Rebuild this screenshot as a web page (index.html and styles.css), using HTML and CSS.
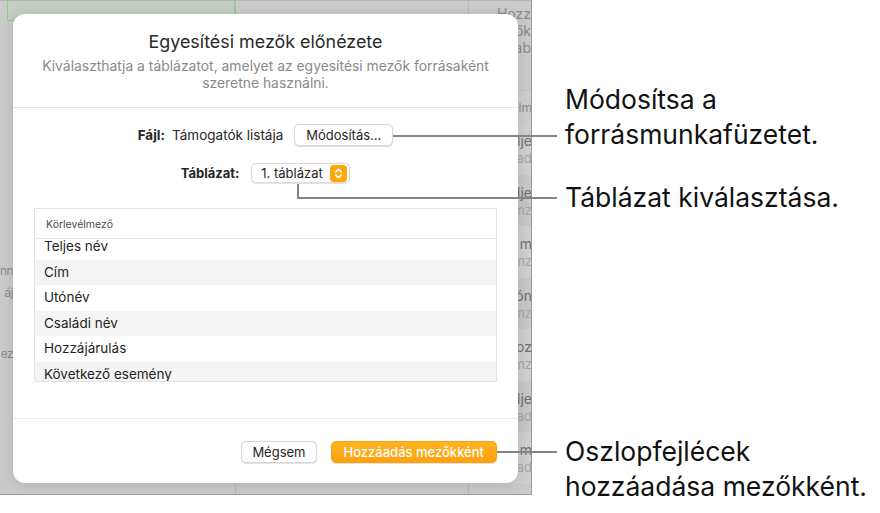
FILE: index.html
```html
<!DOCTYPE html>
<html lang="hu">
<head>
<meta charset="utf-8">
<title>Egyesítési mezők előnézete</title>
<link rel="stylesheet" href="styles.css">
</head>
<body>
<div class="stage">
  <div class="app">
    <div class="col col-a">
      <div class="cell-sel"></div>
      <div class="edge-txt t1">nn</div>
      <div class="edge-txt t2">áj</div>
      <div class="edge-txt t3">ez</div>
    </div>
    <div class="col col-b"></div>
    <div class="col col-c">
      <div class="c-head"><span class="h1">Hozz</span><span>ők</span><span>ab</span></div>
      <div class="c-sub">elm</div>
      <div class="c-row"><span class="n">lje</span><span class="s">lad</span></div>
      <div class="c-row alt"><span class="n">lje</span><span class="s">mz</span></div>
      <div class="c-row"><span class="n">m</span><span class="s">mz</span></div>
      <div class="c-row alt"><span class="n">ón</span><span class="s">mz</span></div>
      <div class="c-row"><span class="n">oz</span><span class="s">mz</span></div>
      <div class="c-row alt"><span class="n">lje</span><span class="s">lad</span></div>
      <div class="c-row"><span class="n">m</span><span class="s">lad</span></div>
    </div>
  </div>

  <div class="dialog">
    <div class="d-head">
      <div class="d-title">Egyesítési mezők előnézete</div>
      <div class="d-sub">Kiválaszthatja a táblázatot, amelyet az egyesítési mezők forrásaként<br>szeretne használni.</div>
    </div>
    <div class="d-body">
      <div class="frow">
        <span class="lbl">Fájl:</span>
        <span class="val">Támogatók listája</span>
        <button class="btn">Módosítás...</button>
      </div>
      <div class="frow trow">
        <span class="lbl">Táblázat:</span>
        <div class="popup">
          <span>1. táblázat</span>
          <svg class="stepper" width="17" height="17" viewBox="0 0 17 17"><rect width="17" height="17" rx="4" fill="#fea808"/><path d="M5.6 7.2 L8.5 4.4 L11.4 7.2 M5.6 9.8 L8.5 12.6 L11.4 9.8" stroke="#fff" stroke-width="1.6" fill="none" stroke-linecap="round" stroke-linejoin="round"/></svg>
        </div>
      </div>
      <div class="list">
        <div class="l-head">Körlevélmező</div>
        <div class="l-body">
          <div class="l-inner">
            <div class="l-row">Teljes név</div>
            <div class="l-row alt">Cím</div>
            <div class="l-row">Utónév</div>
            <div class="l-row alt">Családi név</div>
            <div class="l-row">Hozzájárulás</div>
            <div class="l-row alt">Következő esemény</div>
          </div>
        </div>
      </div>
    </div>
    <div class="d-foot">
      <button class="btn">Mégsem</button>
      <button class="btn primary">Hozzáadás mezőkként</button>
    </div>
  </div>

  <div class="line l1"></div>
  <div class="line l2v"></div>
  <div class="line l2h"></div>
  <div class="line l3"></div>

  <div class="note n1">Módosítsa a<br>forrásmunkafüzetet.</div>
  <div class="note n2">Táblázat kiválasztása.</div>
  <div class="note n3">Oszlopfejlécek<br>hozzáadása mezőkként.</div>
</div>
</body>
</html>
```

FILE: styles.css
```css
* { box-sizing: border-box; }
html, body { margin: 0; padding: 0; background: #fff; }
body { font-family: "Inter", "Liberation Sans", sans-serif; }

.stage {
  position: relative;
  width: 880px;
  height: 513px;
  overflow: hidden;
}

/* dimmed background app */
.app {
  width: 532px;
  height: 495px;
  display: grid;
  grid-template-columns: 235px 233px 64px;
  background: #cacaca;
  border-top: 1px solid #b4b4b4;
  border-right: 1px solid #9c9c9c;
  border-bottom: 1px solid #9c9c9c;
  overflow: hidden;
}
.col { position: relative; overflow: hidden; }
.cell-sel {
  margin-left: 7px;
  height: 20px;
  background: #c3cec3;
  border-left: 1px solid #86cf86;
  border-right: 1px solid #86cf86;
  border-bottom: 1px solid #86cf86;
}
.edge-txt {
  width: 13px;
  display: flex;
  justify-content: flex-end;
  white-space: nowrap;
  font-size: 12px;
  letter-spacing: -0.6px;
  line-height: 18px;
  color: #8a8a8a;
}
.t1 { margin-top: 241px; }
.t2 { margin-top: 4px; }
.t3 { margin-top: 43px; }
.col-b { border-left: 1px solid #b9b9b9; }
.col-c {
  border-left: 1px solid #b9b9b9;
  color: #777;
  font-size: 14px;
  text-align: right;
}
.c-head {
  padding: 4px 1px 0 0;
  height: 90px;
  line-height: 17px;
  color: #8c8c8c;
  border-bottom: 1px solid #c2c2c2;
  white-space: nowrap;
  display: flex;
  flex-direction: column;
  align-items: flex-end;
}
.c-sub {
  height: 32px;
  padding: 9px 0 0 0;
  font-size: 12px;
  color: #8c8c8c;
  white-space: nowrap;
  background: #cdcdcd;
}
.c-row {
  height: 51.5px;
  display: flex;
  flex-direction: column;
  align-items: flex-end;
  padding: 9px 0 0 0;
  white-space: nowrap;
  background: #cfcfcf;
}
.c-row.alt { background: #c7c7c7; }
.c-row .n { color: #6f6f6f; line-height: 18px; }
.c-row .s { color: #a6a6a6; line-height: 17px; font-size: 13px; }

/* dialog (modal overlay) */
.dialog {
  position: absolute;
  left: 13px;
  top: 14px;
  width: 505px;
  height: 469px;
  background: #fff;
  border-radius: 12px;
  box-shadow: 0 2px 14px rgba(0,0,0,0.12);
  display: flex;
  flex-direction: column;
}
.d-head {
  padding: 17px 6px 15px;
  text-align: center;
  border-bottom: 1px solid #e6e6e6;
}
.d-title {
  font-size: 17.9px;
  line-height: 22px;
  color: #2a2a2a;
}
.d-sub {
  margin-top: 5px;
  font-size: 13.9px;
  line-height: 17px;
  color: #8a8a8a;
}
.d-body {
  padding: 16px 21px 0;
  display: flex;
  flex-direction: column;
  align-items: center;
  flex: 1;
  border-bottom: 1px solid #ececec;
}
.frow {
  display: flex;
  align-items: center;
  height: 22px;
  font-size: 13.5px;
  color: #262626;
}
.frow .lbl { font-weight: 700; margin-right: 7px; }
.frow .val { margin-right: 11px; }
.trow { margin-top: 17px; height: 20px; font-size: 13px; }
.trow .lbl { margin-right: 12px; }

.btn {
  font-family: inherit;
  font-size: 13px;
  color: #262626;
  background: #fff;
  border: 1px solid #d6d6d6;
  border-radius: 5px;
  height: 22px;
  padding: 0 11px;
  box-shadow: 0 0.5px 1px rgba(0,0,0,0.12);
  cursor: default;
}
.popup {
  display: flex;
  align-items: center;
  height: 20px;
  width: 99px;
  padding: 0 2px 0 9px;
  justify-content: space-between;
  border: 1px solid #dadada;
  border-radius: 5px;
  box-shadow: 0 0.5px 1px rgba(0,0,0,0.12);
  font-size: 13px;
}
.stepper { display: block; }

.list {
  margin-top: 25px;
  width: 100%;
  height: 174px;
  border: 1px solid #e3e3e3;
  display: flex;
  flex-direction: column;
}
.l-head {
  height: 30px;
  flex: none;
  padding: 9px 0 0 11px;
  font-size: 10.5px;
  color: #4a4a4a;
  border-bottom: 1px solid #e6e6e6;
}
.l-body { flex: 1; overflow: hidden; }
.l-inner { margin-top: -5px; }
.l-row {
  height: 25.6px;
  line-height: 25.6px;
  padding-left: 9px;
  font-size: 13.5px;
  color: #1f1f1f;
}
.l-row.alt { background: #f4f4f4; }

.d-foot {
  height: 64px;
  flex: none;
  display: flex;
  justify-content: flex-end;
  align-items: flex-start;
  gap: 14px;
  padding: 22px 21px 0 0;
}
.d-foot .btn { padding: 0 10px; }
.d-foot .btn.primary {
  background: linear-gradient(#ffb424, #fea10c);
  border: 1px solid #f7a012;
  color: #fff;
  font-weight: 500;
  padding: 0 12px;
}

/* callouts */
.line { position: absolute; background: #858585; }
.l1 { left: 393px; top: 135px; width: 164px; height: 2px; }
.l2v { left: 297px; top: 184px; width: 2px; height: 15px; }
.l2h { left: 297px; top: 197px; width: 260px; height: 2px; }
.l3 { left: 497px; top: 451px; width: 60px; height: 2px; }

.note {
  position: absolute;
  left: 565px;
  font-size: 26.5px;
  line-height: 35px;
  color: #111;
  white-space: nowrap;
}
.n1 { top: 82px; }
.n2 { top: 180px; }
.n3 { top: 434px; }
```
